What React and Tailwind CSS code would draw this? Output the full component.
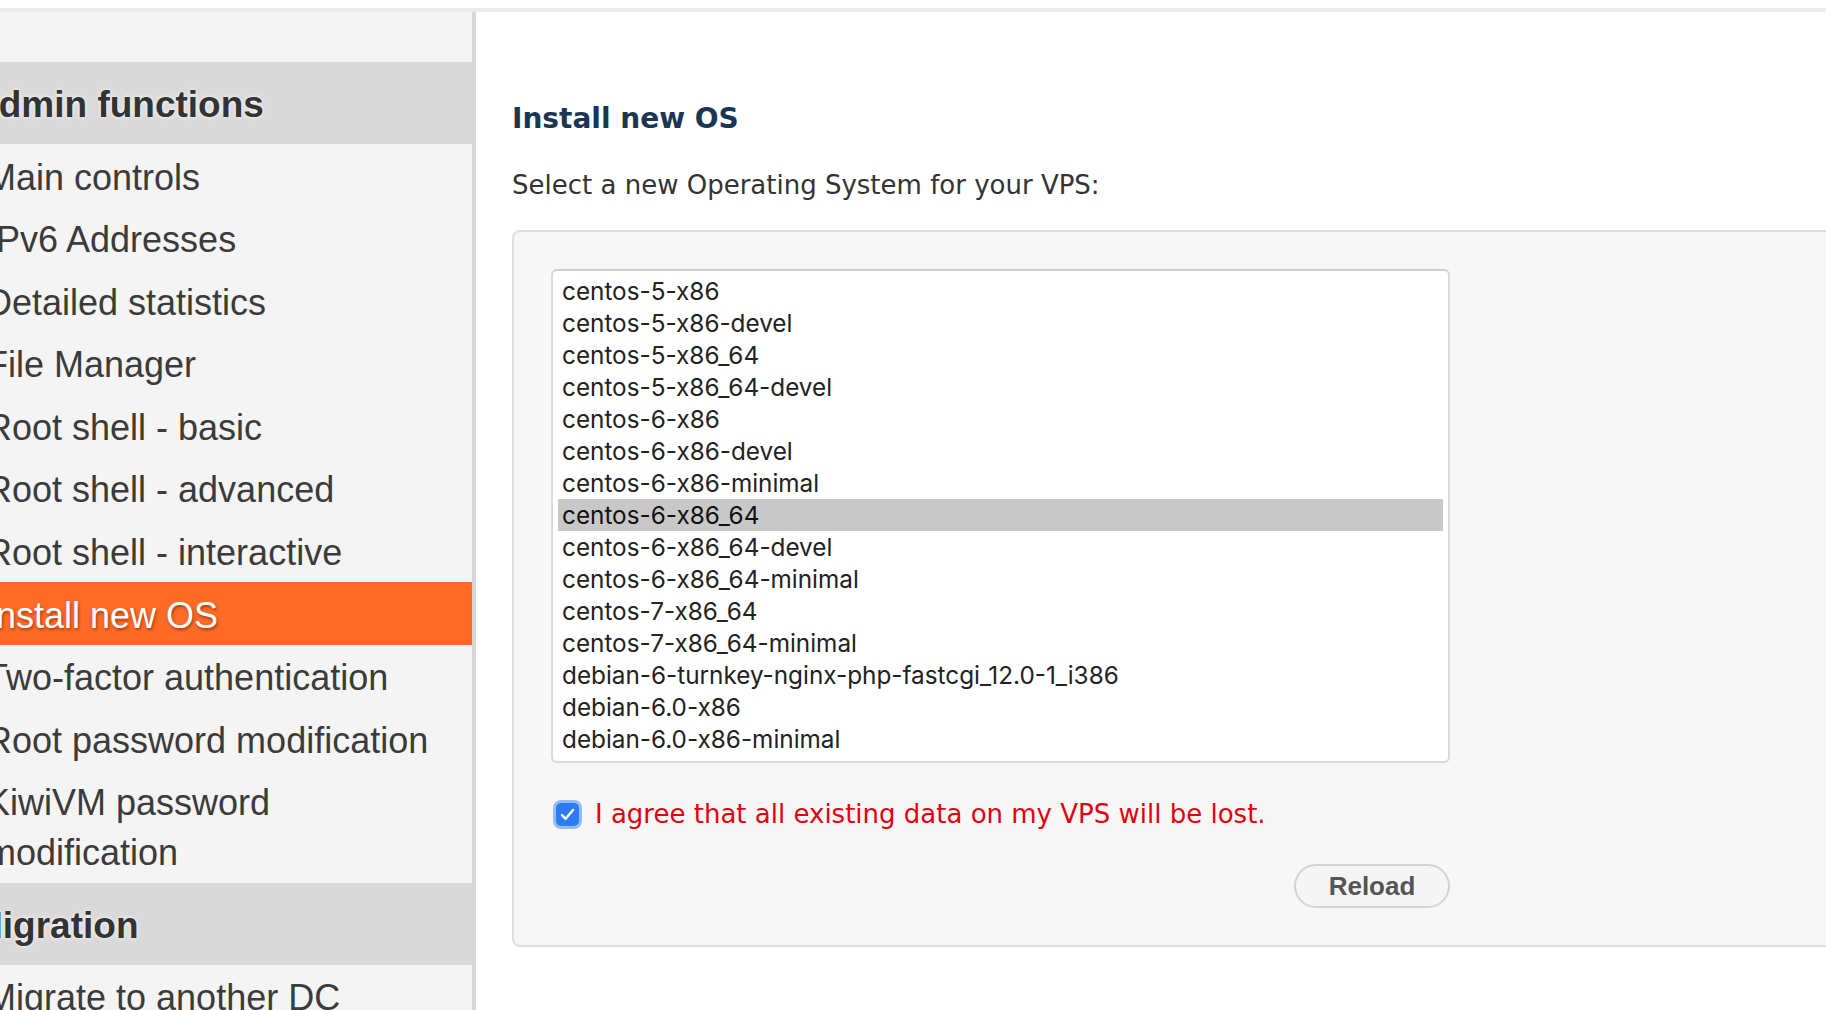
import React from 'react';

const adminItems = [
  'Main controls',
  'IPv6 Addresses',
  'Detailed statistics',
  'File Manager',
  'Root shell - basic',
  'Root shell - advanced',
  'Root shell - interactive',
  'Install new OS',
  'Two-factor authentication',
  'Root password modification',
];

const osList = [
  'centos-5-x86',
  'centos-5-x86-devel',
  'centos-5-x86_64',
  'centos-5-x86_64-devel',
  'centos-6-x86',
  'centos-6-x86-devel',
  'centos-6-x86-minimal',
  'centos-6-x86_64',
  'centos-6-x86_64-devel',
  'centos-6-x86_64-minimal',
  'centos-7-x86_64',
  'centos-7-x86_64-minimal',
  'debian-6-turnkey-nginx-php-fastcgi_12.0-1_i386',
  'debian-6.0-x86',
  'debian-6.0-x86-minimal',
  'debian-7.0-x86',
  'debian-7.0-x86-minimal',
];

function SideHeader({ children }) {
  return (
    <div className="bg-[#d9d9d9] pb-[14px] pt-[18px] text-[37px] font-bold text-[#333] [text-shadow:0_0_4px_#fff]">
      <div className="-ml-[28px] whitespace-nowrap">{children}</div>
    </div>
  );
}

function SideItem({ label, active }) {
  return (
    <div
      className={
        active
          ? 'bg-[#fe6b26] pb-[4.1px] pt-[8.5px] text-white [text-shadow:1px_2px_3px_rgba(90,30,0,0.55)]'
          : 'pb-[4.1px] pt-[8.5px]'
      }
    >
      <div className="-ml-[14px] whitespace-nowrap">{label}</div>
    </div>
  );
}

export default function App() {
  return (
    <div className="h-[1010px] overflow-hidden bg-white font-['DejaVu_Sans',sans-serif]">
      <div className="h-[8px] bg-white" />
      <div className="h-[4px] bg-[#ececec]" />

      <div className="flex h-[998px]">
        {/* 侧边栏 */}
        <aside className="w-[476px] shrink-0 overflow-hidden border-r-4 border-[#d7d7d7] bg-[#f4f4f4] pt-[50px] font-['Liberation_Sans',Arial,sans-serif] text-[36px] leading-[50px] text-[#3b3b3b]">
          <SideHeader>Admin functions</SideHeader>
          {adminItems.map((item) => (
            <SideItem key={item} label={item} active={item === 'Install new OS'} />
          ))}
          <div className="pb-[4.1px] pt-[8.5px]">
            <div className="-ml-[14px] whitespace-nowrap">
              KiwiVM password
              <br />
              modification
            </div>
          </div>
          <SideHeader>Migration</SideHeader>
          <SideItem label="Migrate to another DC" />
        </aside>

        {/* 主内容 */}
        <main className="flex-1 overflow-hidden pl-[36px] pt-[90px]">
          <h2 className="text-[28px] font-bold leading-[34px] text-[#1b3653]">Install new OS</h2>
          <p className="mt-[32px] text-[26px] leading-[34px] text-[#333]">
            Select a new Operating System for your VPS:
          </p>

          <div className="mt-[28px] w-[1400px] rounded-[8px] border-2 border-[#dedede] bg-[#f7f7f7] pb-[37px] pl-[37px] pt-[37px]">
            <div className="w-[899px]">
              <div className="h-[494px] overflow-hidden rounded-[6px] border-2 border-[#dadada] border-t-[#cdcdcd] bg-white px-[5px] pt-[4px] font-['Inter',sans-serif] text-[24.3px] leading-[32px] text-[#222]">
                {osList.map((os) => (
                  <div
                    key={os}
                    className={os === 'centos-6-x86_64' ? 'bg-[#c8c8c8] px-[4px] text-[#111]' : 'px-[4px]'}
                  >
                    {os}
                  </div>
                ))}
              </div>

              <div className="mt-[36px] flex h-[30px] items-center">
                <span className="ml-[2px] flex h-[29px] w-[29px] items-center justify-center rounded-[8px] bg-[#93bdf8] p-[3px]">
                  <span className="flex h-full w-full items-center justify-center rounded-[5px] bg-[#2d7cf6]">
                    <svg width="15" height="13" viewBox="0 0 15 13" fill="none">
                      <path d="M2 7.2 L5.6 10.8 L13 2" stroke="#fff" strokeWidth="2.4" strokeLinecap="round" strokeLinejoin="round" />
                    </svg>
                  </span>
                </span>
                <span className="ml-[13px] text-[26px] leading-[30px] text-[#e3000f]">
                  I agree that all existing data on my VPS will be lost.
                </span>
              </div>

              <div className="mt-[35px] flex justify-end">
                <button className="h-[44px] w-[156px] rounded-full border-2 border-[#d3d3d3] bg-[#f5f5f5] font-['Liberation_Sans',Arial,sans-serif] text-[26px] font-bold text-[#555]">
                  Reload
                </button>
              </div>
            </div>
          </div>
        </main>
      </div>
    </div>
  );
}
